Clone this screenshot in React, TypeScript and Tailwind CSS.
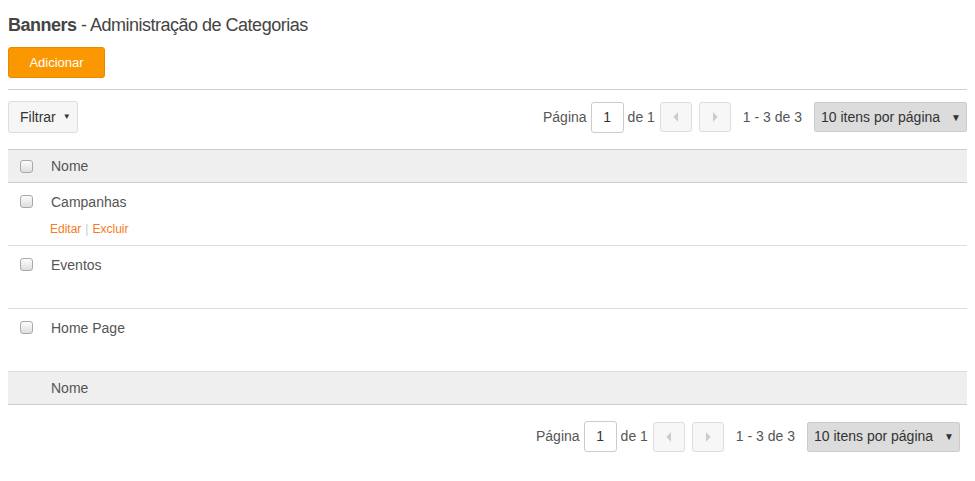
const Checkbox = () => (
  <span className="inline-block w-[13px] h-[13px] rounded-[3px] border border-[#a9a9a9] bg-gradient-to-b from-[#fcfcfc] to-[#dedede]"></span>
);

const Arrow = ({ dir }: { dir: "left" | "right" }) => (
  <svg width="6" height="12" viewBox="0 0 6 12">
    {dir === "left" ? (
      <polygon points="5,1 0.5,6 5,11" fill="#cccccc" />
    ) : (
      <polygon points="1,1 5.5,6 1,11" fill="#cccccc" />
    )}
  </svg>
);

const Pager = ({ className }: { className?: string }) => (
  <div className={"flex items-center text-[14px] text-[#555] " + (className ?? "")}>
    <span>Página</span>
    <div className="ml-[4px] w-[33px] h-[31px] border border-[#ccc] rounded-[3px] bg-white flex items-center justify-center text-[#333]">
      1
    </div>
    <span className="ml-[4px]">de 1</span>
    <div className="ml-[5px] w-[32px] h-[30px] border border-[#ddd] rounded-[3px] bg-[#f7f7f7] flex items-center justify-center">
      <Arrow dir="left" />
    </div>
    <div className="ml-[7px] w-[32px] h-[30px] border border-[#ddd] rounded-[3px] bg-[#f7f7f7] flex items-center justify-center">
      <Arrow dir="right" />
    </div>
    <span className="ml-[12px]">1 - 3 de 3</span>
    <div className="ml-[12px] w-[153px] h-[30px] bg-[#dcdcdc] border border-[#ccc] rounded-[2px] flex items-center justify-between pl-[6px] pr-[5px] text-[#333]">
      <span>10 itens por página</span>
      <span className="text-[10px]">▼</span>
    </div>
  </div>
);

const rows = ["Campanhas", "Eventos", "Home Page"];

export default function App() {
  return (
    <div className="px-[8px] bg-white min-h-[481px] font-['Liberation_Sans',Arial,sans-serif]">
      <h1 className="pt-[13px] text-[18px] leading-[24px] text-[#444] tracking-[-0.5px]">
        <span className="font-bold">Banners</span> - Administração de Categorias
      </h1>
      <button className="mt-[10px] w-[97px] h-[31px] rounded-[3px] bg-[#fb9700] border border-[#e88a00] text-white text-[13px]">
        Adicionar
      </button>
      <div className="mt-[11px] border-t border-[#cfcfcf]"></div>
      <div className="mt-[11px] flex items-center justify-between">
        <button className="w-[70px] h-[32px] rounded-[3px] bg-[#f6f6f6] border border-[#ddd] text-[14px] text-[#333] flex items-center pl-[11px] gap-[7px]">
          Filtrar <span className="text-[8px]">▼</span>
        </button>
        <Pager className="pl-[1px]" />
      </div>
      <div className="mt-[16px] border-t border-[#ccc]">
        <div className="h-[33px] bg-[#efefef] border-b border-[#ccc] flex items-center text-[14px] text-[#555]">
          <div className="w-[43px] pl-[12px] flex items-center">
            <Checkbox />
          </div>
          <span>Nome</span>
        </div>
        {rows.map((name, i) => (
          <div key={name} className="h-[63px] border-b border-[#ddd] flex items-start pt-[11px] text-[14px] text-[#555]">
            <div className="w-[43px] pl-[12px] pt-[1px] flex">
              <Checkbox />
            </div>
            <div>
              <div className="leading-[16px]">{name}</div>
              {i === 0 && (
                <div className="mt-[12px] text-[12px] leading-[14px] -ml-[1px]">
                  <span className="text-[#f57c1f]">Editar</span>
                  <span className="text-[#ccc] mx-[4px]">|</span>
                  <span className="text-[#f57c1f]">Excluir</span>
                </div>
              )}
            </div>
          </div>
        ))}
        <div className="h-[34px] bg-[#efefef] border-b border-[#ccc] flex items-center text-[14px] text-[#555] -mt-[1px] border-t border-t-[#ddd]">
          <div className="w-[43px]"></div>
          <span>Nome</span>
        </div>
      </div>
      <div className="mt-[16px] flex justify-end pr-[7px]">
        <Pager />
      </div>
    </div>
  );
}
